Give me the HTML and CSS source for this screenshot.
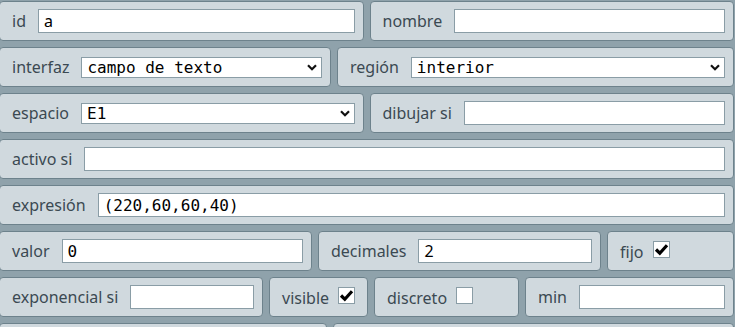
FILE: index.html
```html
<!DOCTYPE html>
<html lang="es">
<head>
  <meta charset="UTF-8" />
  <meta name="viewport" content="width=device-width, initial-scale=1.0"/>
  <title>Control</title>
  <link rel="stylesheet" href="styles.css">
</head>
<body>
  <div class="form">
    <div class="row">
      <div class="field grow"><label>id</label><input type="text" value="a"></div>
      <div class="field grow"><label>nombre</label><input type="text" value=""></div>
    </div>

    <div class="row">
      <div class="field w332">
        <label>interfaz</label>
        <div class="pick">
          <select class="mono">
            <option>campo de texto</option>
            <option>pulsador</option>
            <option>botón</option>
          </select>
          <svg class="chev" viewBox="0 0 10 7" width="10" height="7"><path d="M1 1.2 L5 5.2 L9 1.2" fill="none" stroke="#111" stroke-width="2.2"/></svg>
        </div>
      </div>
      <div class="field grow">
        <label>región</label>
        <div class="pick">
          <select class="mono">
            <option>interior</option>
            <option>norte</option>
            <option>sur</option>
          </select>
          <svg class="chev" viewBox="0 0 10 7" width="10" height="7"><path d="M1 1.2 L5 5.2 L9 1.2" fill="none" stroke="#111" stroke-width="2.2"/></svg>
        </div>
      </div>
    </div>

    <div class="row">
      <div class="field grow">
        <label>espacio</label>
        <div class="pick">
          <select class="mono">
            <option>E1</option>
          </select>
          <svg class="chev" viewBox="0 0 10 7" width="10" height="7"><path d="M1 1.2 L5 5.2 L9 1.2" fill="none" stroke="#111" stroke-width="2.2"/></svg>
        </div>
      </div>
      <div class="field grow"><label>dibujar si</label><input type="text" value=""></div>
    </div>

    <div class="row">
      <div class="field grow"><label>activo si</label><input type="text" value=""></div>
    </div>

    <div class="row">
      <div class="field grow"><label>expresión</label><input type="text" class="mono" value="(220,60,60,40)"></div>
    </div>

    <div class="row">
      <div class="field w313"><label>valor</label><input type="text" class="mono" value="0"></div>
      <div class="field w283"><label>decimales</label><input type="text" value="2"></div>
      <div class="field grow check">
        <label>fijo <span class="box"><svg viewBox="0 0 15 15" width="15" height="15"><path d="M2 7.5 L5.8 11.2 L13 3.2" fill="none" stroke="#000" stroke-width="3.2"/></svg></span></label>
      </div>
    </div>

    <div class="row">
      <div class="field w264"><label>exponencial si</label><input type="text" value=""></div>
      <div class="field w99 check">
        <label>visible <span class="box"><svg viewBox="0 0 15 15" width="15" height="15"><path d="M2 7.5 L5.8 11.2 L13 3.2" fill="none" stroke="#000" stroke-width="3.2"/></svg></span></label>
      </div>
      <div class="field w145 check">
        <label>discreto <span class="box"></span></label>
      </div>
      <div class="field grow"><label>min</label><input type="text" value=""></div>
    </div>

    <!-- fila siguiente, casi fuera de la vista -->
    <div class="row">
      <div class="field w328"></div>
      <div class="field grow"></div>
    </div>
  </div>
</body>
</html>
```

FILE: styles.css
```css
body {
  margin: 0;
  background-color: #8fa2ab;
  font-family: 'Noto Sans', 'Open Sans', sans-serif;
  font-size: 16px;
  color: #3b4952;
  overflow: hidden;
}
.form {
  width: 735px;
  margin-left: -1px;
  padding-top: 1px;
}
.row {
  display: flex;
  gap: 6px;
  margin-bottom: 6px;
}
.field {
  box-sizing: border-box;
  height: 40px;
  display: flex;
  align-items: center;
  gap: 12px;
  padding: 0 8px 0 12px;
  background: #d0d9de;
  border: 1px solid #6d828c;
  border-radius: 4px;
}
.grow { flex: 1; min-width: 0; }
.w332 { width: 332px; }
.w313 { width: 313px; }
.w283 { width: 283px; }
.w264 { width: 264px; }
.w99 { width: 99px; }
.w145 { width: 145px; }
.w328 { width: 328px; }
.field label {
  white-space: nowrap;
}
input, select {
  flex: 1;
  min-width: 0;
  box-sizing: border-box;
  height: 24px;
  margin: 0;
  padding: 0 5px;
  border: 1px solid #8a9da6;
  border-radius: 0;
  background: white;
  color: #000;
  font-family: 'Noto Sans', sans-serif;
  font-size: 16px;
  outline: none;
}
.pick {
  flex: 1;
  min-width: 0;
  display: flex;
  position: relative;
}
select {
  -webkit-appearance: none;
  appearance: none;
  height: 21px;
  padding: 0 20px 0 5px;
  line-height: 19px;
}
.chev {
  position: absolute;
  right: 5px;
  top: 7px;
  pointer-events: none;
}
.mono {
  font-family: 'DejaVu Sans Mono', monospace;
}
.check label {
  display: block;
  line-height: 22px;
  padding-top: 2px;
}
.box {
  display: inline-block;
  box-sizing: border-box;
  width: 17px;
  height: 17px;
  margin-left: 5px;
  border: 1px solid #8a9da6;
  background: white;
  vertical-align: baseline;
}
.box svg {
  display: block;
}
```
